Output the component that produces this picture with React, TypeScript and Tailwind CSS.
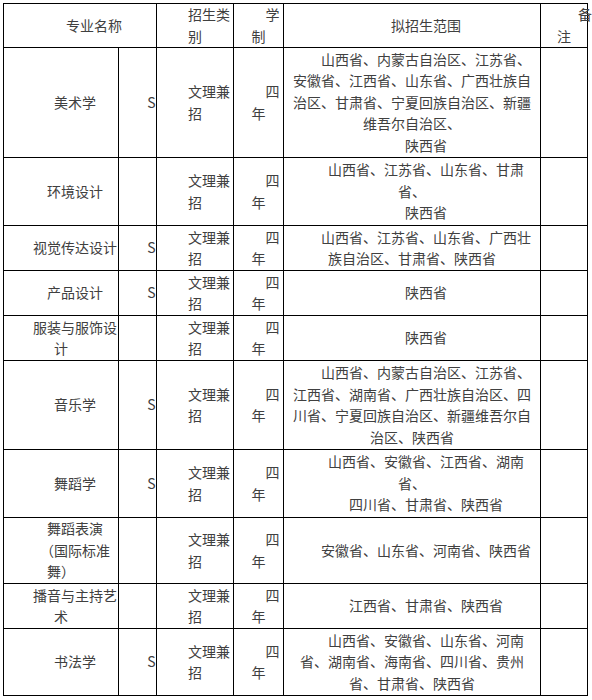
import React from "react";

type Row = {
  name: string[];
  s: string;
  range: string[];
  h: string;
};

const rows: Row[] = [
  {
    name: ["美术学"],
    s: "S",
    range: [
      "山西省、内蒙古自治区、江苏省、安徽省、江西省、山东省、广西壮族自治区、甘肃省、宁夏回族自治区、新疆维吾尔自治区、",
      "陕西省",
    ],
    h: "h-[110px]",
  },
  { name: ["环境设计"], s: "", range: ["山西省、江苏省、山东省、甘肃省、", "陕西省"], h: "h-[68px]" },
  {
    name: ["视觉传达设计"],
    s: "S",
    range: ["山西省、江苏省、山东省、广西壮族自治区、甘肃省、陕西省"],
    h: "h-[45px]",
  },
  { name: ["产品设计"], s: "S", range: ["陕西省"], h: "h-[45px]" },
  { name: ["服装与服饰设计"], s: "", range: ["陕西省"], h: "h-[45px]" },
  {
    name: ["音乐学"],
    s: "S",
    range: [
      "山西省、内蒙古自治区、江苏省、江西省、湖南省、广西壮族自治区、四川省、宁夏回族自治区、新疆维吾尔自治区、陕西省",
    ],
    h: "h-[89px]",
  },
  {
    name: ["舞蹈学"],
    s: "S",
    range: ["山西省、安徽省、江西省、湖南省、", "四川省、甘肃省、陕西省"],
    h: "h-[68px]",
  },
  {
    name: ["舞蹈表演", "（国际标准舞）"],
    s: "",
    range: ["安徽省、山东省、河南省、陕西省"],
    h: "h-[66px]",
  },
  { name: ["播音与主持艺术"], s: "", range: ["江西省、甘肃省、陕西省"], h: "h-[45px]" },
  {
    name: ["书法学"],
    s: "S",
    range: [
      "山西省、安徽省、山东省、河南省、湖南省、海南省、四川省、贵州省、甘肃省、陕西省",
    ],
    h: "h-[67px]",
  },
];

// every paragraph in the source is centred with a 2em first-line indent
function P({ children }: { children: React.ReactNode }) {
  return <p className="indent-[2em] text-center">{children}</p>;
}

const cell = "border border-black align-middle p-0";

export default function App() {
  return (
    <div className="bg-white w-[592px] h-[700px] pt-[3px] pl-[3px]">
      <table
        className="table-fixed border-collapse w-[585px] text-[14px] leading-[21.5px] text-[#404040]"
        style={{ fontFamily: '"Noto Sans CJK SC", "Noto Sans", sans-serif' }}
      >
        <colgroup>
          <col className="w-[115px]" />
          <col className="w-[38px]" />
          <col className="w-[77px]" />
          <col className="w-[50px]" />
          <col className="w-[257px]" />
          <col className="w-[47px]" />
        </colgroup>
        <thead>
          <tr className="h-[44px]">
            <th colSpan={2} className={`${cell} font-normal`}>
              <P>专业名称</P>
            </th>
            <th className={`${cell} font-normal`}>
              <P>招生类别</P>
            </th>
            <th className={`${cell} font-normal`}>
              <P>学制</P>
            </th>
            <th className={`${cell} font-normal px-[4px]`}>
              <P>拟招生范围</P>
            </th>
            <th className={`${cell} font-normal px-[9px]`}>
              <P>备注</P>
            </th>
          </tr>
        </thead>
        <tbody>
          {rows.map((r) => (
            <tr key={r.name.join("")} className={r.h}>
              <td className={cell}>
                {r.name.map((n) => (
                  <P key={n}>{n}</P>
                ))}
              </td>
              <td className={cell}>{r.s && <P>{r.s}</P>}</td>
              <td className={cell}>
                <P>文理兼招</P>
              </td>
              <td className={cell}>
                <P>四年</P>
              </td>
              <td className={`${cell} px-[4px]`}>
                {r.range.map((t) => (
                  <P key={t}>{t}</P>
                ))}
              </td>
              <td className={cell}></td>
            </tr>
          ))}
        </tbody>
      </table>
    </div>
  );
}
